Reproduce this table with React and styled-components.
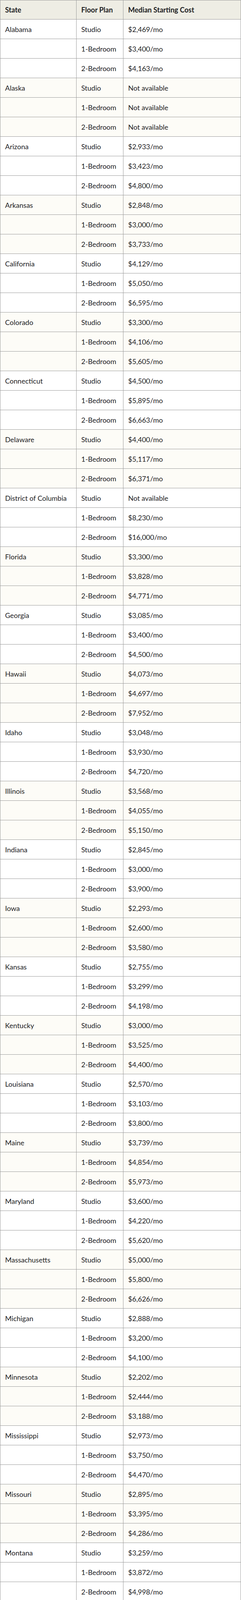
import React from 'react';
import styled, { createGlobalStyle } from 'styled-components';

const rows = [
  ['Alabama', '$2,469/mo', '$3,400/mo', '$4,163/mo'],
  ['Alaska', 'Not available', 'Not available', 'Not available'],
  ['Arizona', '$2,933/mo', '$3,423/mo', '$4,800/mo'],
  ['Arkansas', '$2,848/mo', '$3,000/mo', '$3,733/mo'],
  ['California', '$4,129/mo', '$5,050/mo', '$6,595/mo'],
  ['Colorado', '$3,300/mo', '$4,106/mo', '$5,605/mo'],
  ['Connecticut', '$4,500/mo', '$5,895/mo', '$6,663/mo'],
  ['Delaware', '$4,400/mo', '$5,117/mo', '$6,371/mo'],
  ['District of Columbia', 'Not available', '$8,230/mo', '$16,000/mo'],
  ['Florida', '$3,300/mo', '$3,828/mo', '$4,771/mo'],
  ['Georgia', '$3,085/mo', '$3,400/mo', '$4,500/mo'],
  ['Hawaii', '$4,073/mo', '$4,697/mo', '$7,952/mo'],
  ['Idaho', '$3,048/mo', '$3,930/mo', '$4,720/mo'],
  ['Illinois', '$3,568/mo', '$4,055/mo', '$5,150/mo'],
  ['Indiana', '$2,845/mo', '$3,000/mo', '$3,900/mo'],
  ['Iowa', '$2,293/mo', '$2,600/mo', '$3,580/mo'],
  ['Kansas', '$2,755/mo', '$3,299/mo', '$4,198/mo'],
  ['Kentucky', '$3,000/mo', '$3,525/mo', '$4,400/mo'],
  ['Louisiana', '$2,570/mo', '$3,103/mo', '$3,800/mo'],
  ['Maine', '$3,739/mo', '$4,854/mo', '$5,973/mo'],
  ['Maryland', '$3,600/mo', '$4,220/mo', '$5,620/mo'],
  ['Massachusetts', '$5,000/mo', '$5,800/mo', '$6,626/mo'],
  ['Michigan', '$2,888/mo', '$3,200/mo', '$4,100/mo'],
  ['Minnesota', '$2,202/mo', '$2,444/mo', '$3,188/mo'],
  ['Mississippi', '$2,973/mo', '$3,750/mo', '$4,470/mo'],
  ['Missouri', '$2,895/mo', '$3,395/mo', '$4,286/mo'],
  ['Montana', '$3,259/mo', '$3,872/mo', '$4,998/mo'],
  ['Nebraska', '$3,107/mo', '$3,500/mo', '$4,539/mo'],
  ['Nevada', '$3,758/mo', '$4,150/mo', '$5,300/mo'],
  ['New Hampshire', '$4,230/mo', '$5,075/mo', '$6,295/mo'],
  ['New Jersey', '$3,600/mo', '$4,548/mo', '$5,500/mo'],
  ['New Mexico', '$2,600/mo', '$3,178/mo', '$4,245/mo'],
  ['New York', '$3,919/mo', '$4,368/mo', '$5,090/mo'],
  ['North Carolina', '$3,320/mo', '$3,900/mo', '$4,880/mo'],
  ['North Dakota', '$2,340/mo', '$3,164/mo', '$4,107/mo'],
  ['Ohio', '$2,995/mo', '$3,620/mo', '$4,500/mo'],
  ['Oklahoma', '$2,550/mo', '$2,945/mo', '$3,640/mo'],
  ['Oregon', '$2,993/mo', '$3,780/mo', '$4,800/mo'],
  ['Pennsylvania', '$2,950/mo', '$3,728/mo', '$4,755/mo'],
  ['Rhode Island', '$5,195/mo', '$6,952/mo', '$8,500/mo'],
  ['South Carolina', '$3,190/mo', '$3,600/mo', '$4,567/mo'],
  ['South Dakota', '$1,900/mo', '$3,100/mo', '$3,559/mo'],
  ['Tennessee', '$2,640/mo', '$3,395/mo', '$4,510/mo'],
  ['Texas', '$2,498/mo', '$3,113/mo', '$3,998/mo'],
  ['Utah', '$2,893/mo', '$4,045/mo', '$4,715/mo'],
  ['Vermont', '$4,350/mo', '$5,993/mo', '$6,615/mo'],
  ['Virginia', '$3,693/mo', '$3,876/mo', '$5,050/mo'],
  ['Washington', '$3,700/mo', '$4,500/mo', '$5,598/mo'],
  ['West Virginia', '$3,951/mo', '$3,293/mo', '$4,200/mo'],
  ['Wisconsin', '$2,614/mo', '$3,132/mo', '$3,840/mo'],
  ['Wyoming', '$1,977/mo', '$2,585/mo', '$3,450/mo']
];

const plans = ['Studio', '1-Bedroom', '2-Bedroom'];
const linked = ['Vermont'];

const GlobalStyle = createGlobalStyle`
  html, body {
    margin: 0;
    padding: 0;
    background: #fff;
  }
  body {
    font-family: Lato, "Open Sans", sans-serif;
    color: #1d1d1f;
  }
`;

// separate borders so every row is exactly 50px and the table is 7700px tall
const Table = styled.table`
  display: table;
  width: 617px;
  border-collapse: separate;
  border-spacing: 0;
  table-layout: fixed;
  font-size: 18px;
  border-top: 1px solid #9a9a9a;
  border-left: 1px solid #9a9a9a;
`;

const Th = styled.th`
  box-sizing: border-box;
  height: 49px;
  background: #eeede4;
  border-right: 1px solid #9a9a9a;
  border-bottom: 1px solid #9a9a9a;
  padding: 0 12px;
  line-height: 24px;
  text-align: left;
  font-weight: 700;
  vertical-align: middle;
`;

const Row = styled.tr`
  background: ${(p) => (p.$shaded ? '#fdfcf7' : '#ffffff')};
`;

const Td = styled.td`
  box-sizing: border-box;
  height: 50px;
  border-right: 1px solid #9a9a9a;
  border-bottom: 1px solid #9a9a9a;
  padding: 0 12px;
  line-height: 24px;
  white-space: nowrap;
  vertical-align: middle;
`;

const StateLink = styled.a`
  color: inherit;
  text-decoration: underline;
  text-underline-offset: 3px;
  text-decoration-thickness: 1px;
`;

function App() {
  return (
    <>
      <GlobalStyle />
      <Table>
        <colgroup>
          <col style={{ width: 195 }} />
          <col style={{ width: 120 }} />
          <col />
        </colgroup>
        <thead>
          <tr>
            <Th>State</Th>
            <Th>Floor Plan</Th>
            <Th>Median Starting Cost</Th>
          </tr>
        </thead>
        <tbody>
          {rows.map(([state, ...costs], i) =>
            costs.map((cost, j) => (
              <Row key={state + j} $shaded={i % 2 === 1}>
                <Td>
                  {j === 0 &&
                    (linked.includes(state) ? (
                      <StateLink href="#">{state}</StateLink>
                    ) : (
                      state
                    ))}
                </Td>
                <Td>{plans[j]}</Td>
                <Td>{cost}</Td>
              </Row>
            ))
          )}
        </tbody>
      </Table>
    </>
  );
}

export default App;
